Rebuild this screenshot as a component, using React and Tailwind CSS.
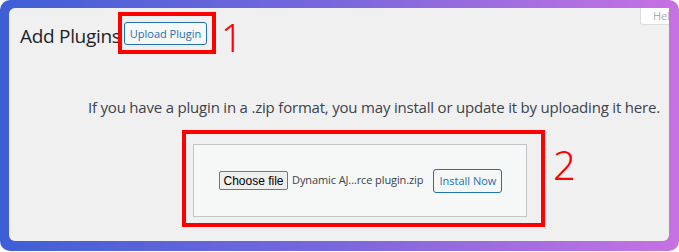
export default function App() {
    return (
        <div className="w-[679px] h-[252px] bg-white">
            <div className="w-[679px] h-[251px] rounded-[10px] bg-gradient-to-r from-[#3d5fd6] via-[#7a67dc] to-[#c771e2] pl-[9px] pr-[10px] pt-[8px] pb-[10px]">
                <div className="relative w-full h-full rounded-[6px] bg-[#f0f0f1] font-['Open_Sans',sans-serif] text-[#1d2327]">
                    {/* help tab clipped at top right */}
                    <div className="absolute right-0 top-0 w-[29px] h-[17px] bg-white border-l border-b border-[#dcdcde] rounded-bl-[3px] overflow-hidden">
                        <span className="block pl-[12px] text-[11px] leading-[16px] text-[#a7aaad] whitespace-nowrap">Help</span>
                    </div>

                    <div className="flex items-center pt-[2px]">
                        <h1 className="pl-[11px] w-[109px] shrink-0 text-[19px] leading-[24px] font-normal text-[#1d2327] tracking-[-0.3px] mt-[6px] whitespace-nowrap">Add Plugins</h1>
                        <div className="shrink-0 border-4 border-[#ff0000] pl-[2px] pr-[5px] pt-[4px] pb-[5px]">
                            <button className="h-[23px] w-[83px] rounded-[3px] border border-[#2271b1] bg-[#f6f7f7] text-[#2271b1] text-[11px] leading-[20px] whitespace-nowrap">
                                Upload Plugin
                            </button>
                        </div>
                        <span className="ml-[5px] mt-[8px] text-[38px] leading-[38px] font-light text-[#ff0000] font-['Noto_Sans',sans-serif]">1</span>
                    </div>

                    <p className="mt-[42px] pl-[79px] text-[15px] leading-[18px] text-[#3c434a] tracking-[-0.2px] whitespace-nowrap">
                        If you have a plugin in a .zip format, you may install or update it by uploading it here.
                    </p>

                    <div className="flex items-center mt-[14px] ml-[173px]">
                        <div className="shrink-0 w-[363px] h-[97px] border-4 border-[#ff0000] pl-[7px] pt-[10px]">
                            <div className="w-[334px] h-[73px] bg-[#f6f7f7] border border-[#c3c4c7] flex items-center pl-[25px]">
                                <button className="shrink-0 h-[19px] w-[69px] rounded-[2px] border border-[#767676] bg-[#efefef] text-[12px] leading-[16px] text-black font-['Liberation_Sans',sans-serif] whitespace-nowrap">
                                    Choose file
                                </button>
                                <span className="ml-[4px] text-[11px] text-[#3c434a] whitespace-nowrap tracking-[-0.1px]">Dynamic AJ...rce plugin.zip</span>
                                <button className="shrink-0 ml-[10px] h-[24px] w-[69px] rounded-[3px] border border-[#2271b1] bg-[#f6f7f7] text-[#2271b1] text-[11px] leading-[20px] whitespace-nowrap">
                                    Install Now
                                </button>
                            </div>
                        </div>
                        <span className="ml-[8px] -mt-[28px] text-[40px] leading-[40px] font-light text-[#ff0000] font-['Noto_Sans',sans-serif]">2</span>
                    </div>
                </div>
            </div>
        </div>
    );
}
